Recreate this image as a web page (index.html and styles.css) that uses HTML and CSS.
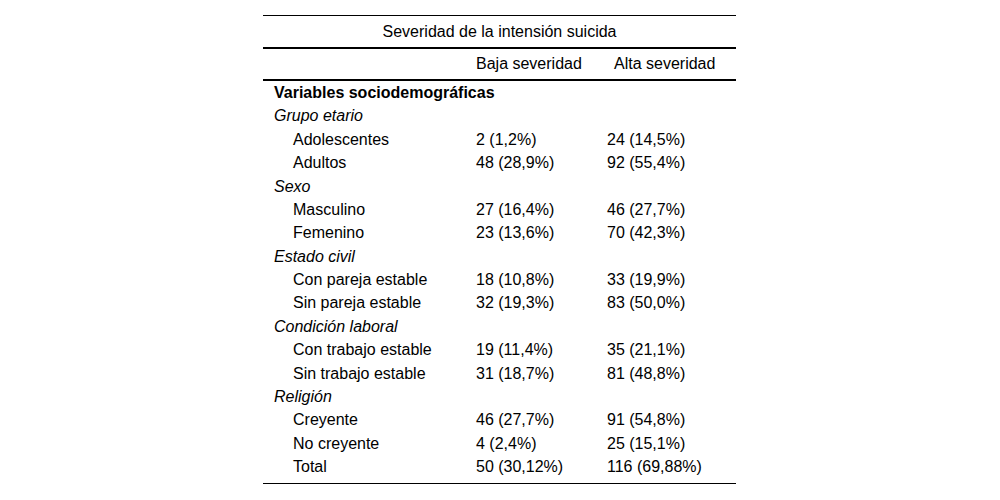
FILE: index.html
```html
<!DOCTYPE html>
<html lang="es">
<head>
<meta charset="utf-8">
<title>Severidad de la intensión suicida</title>
<link rel="stylesheet" href="styles.css">
</head>
<body>
<div class="page">
<table class="stats">
  <colgroup>
    <col class="c-label">
    <col class="c-baja">
    <col class="c-alta">
  </colgroup>
  <thead>
    <tr class="head-top">
      <th colspan="3" class="span-head">Severidad de la intensión suicida</th>
    </tr>
    <tr class="head-sub">
      <th></th>
      <th class="col-baja">Baja severidad</th>
      <th class="col-alta">Alta severidad</th>
    </tr>
  </thead>
  <tbody>
    <tr><td class="section" colspan="3">Variables sociodemográficas</td></tr>
    <tr><td class="group" colspan="3">Grupo etario</td></tr>
    <tr><td class="item">Adolescentes</td><td class="val">2 (1,2%)</td><td class="val">24 (14,5%)</td></tr>
    <tr><td class="item">Adultos</td><td class="val">48 (28,9%)</td><td class="val">92 (55,4%)</td></tr>
    <tr><td class="group" colspan="3">Sexo</td></tr>
    <tr><td class="item">Masculino</td><td class="val">27 (16,4%)</td><td class="val">46 (27,7%)</td></tr>
    <tr><td class="item">Femenino</td><td class="val">23 (13,6%)</td><td class="val">70 (42,3%)</td></tr>
    <tr><td class="group" colspan="3">Estado civil</td></tr>
    <tr><td class="item">Con pareja estable</td><td class="val">18 (10,8%)</td><td class="val">33 (19,9%)</td></tr>
    <tr><td class="item">Sin pareja estable</td><td class="val">32 (19,3%)</td><td class="val">83 (50,0%)</td></tr>
    <tr><td class="group" colspan="3">Condición laboral</td></tr>
    <tr><td class="item">Con trabajo estable</td><td class="val">19 (11,4%)</td><td class="val">35 (21,1%)</td></tr>
    <tr><td class="item">Sin trabajo estable</td><td class="val">31 (18,7%)</td><td class="val">81 (48,8%)</td></tr>
    <tr><td class="group" colspan="3">Religión</td></tr>
    <tr><td class="item">Creyente</td><td class="val">46 (27,7%)</td><td class="val">91 (54,8%)</td></tr>
    <tr><td class="item">No creyente</td><td class="val">4 (2,4%)</td><td class="val">25 (15,1%)</td></tr>
    <tr class="last"><td class="item">Total</td><td class="val">50 (30,12%)</td><td class="val">116 (69,88%)</td></tr>
  </tbody>
</table>
</div>
</body>
</html>
```
FILE: styles.css
```css
html, body {
  margin: 0;
  padding: 0;
  background: #ffffff;
}

body {
  font-family: "Liberation Sans", Arial, Helvetica, sans-serif;
  font-size: 16px;
  color: #000000;
}

.page {
  padding-top: 15px;
  padding-left: 263px;
}

.stats {
  width: 473px;
  border-collapse: collapse;
  table-layout: fixed;
}

.c-label { width: 203px; }
.c-baja { width: 131px; }
.c-alta { width: 139px; }

.stats th,
.stats td {
  padding: 0;
}

.stats th {
  font-weight: normal;
  text-align: left;
}

.head-top th {
  border-top: 1px solid #000;
  border-bottom: 2px solid #000;
  height: 31px;
  line-height: 31px;
}

.head-top .span-head {
  text-align: center;
}

.head-sub th {
  border-bottom: 2px solid #000;
  height: 30px;
  line-height: 30px;
}

.head-sub .col-baja {
  padding-left: 10px;
}

.head-sub .col-alta {
  padding-left: 17px;
}

.stats td {
  line-height: 23.375px;
  height: 23.375px;
  white-space: nowrap;
}

.stats .section {
  font-weight: bold;
  padding-left: 11px;
}

.stats .group {
  font-style: italic;
  padding-left: 11px;
}

.stats .item {
  padding-left: 30px;
}

.stats .val {
  padding-left: 10px;
}

.stats .last td {
  padding-bottom: 5px;
  border-bottom: 1px solid #000;
}
```
